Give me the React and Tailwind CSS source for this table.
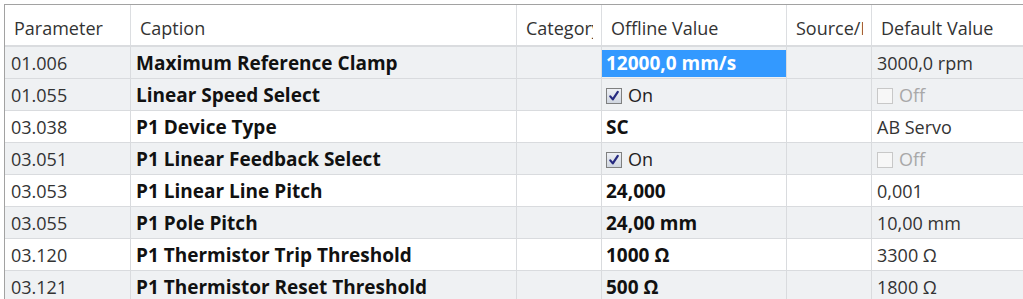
import React from "react";

const rows = [
  { id: "01.006", caption: "Maximum Reference Clamp", value: "12000,0 mm/s", def: "3000,0 rpm", selected: true },
  { id: "01.055", caption: "Linear Speed Select", check: true, defCheck: true },
  { id: "03.038", caption: "P1 Device Type", value: "SC", def: "AB Servo" },
  { id: "03.051", caption: "P1 Linear Feedback Select", check: true, defCheck: true },
  { id: "03.053", caption: "P1 Linear Line Pitch", value: "24,000", def: "0,001" },
  { id: "03.055", caption: "P1 Pole Pitch", value: "24,00 mm", def: "10,00 mm" },
  { id: "03.120", caption: "P1 Thermistor Trip Threshold", value: "1000 Ω", def: "3300 Ω" },
  { id: "03.121", caption: "P1 Thermistor Reset Threshold", value: "500 Ω", def: "1800 Ω" },
];

const cols = "grid grid-cols-[126px_386px_85px_185px_85px_1fr]";

const CheckOn = () => (
  <span className="flex items-center gap-[6px]">
    <span className="shrink-0 w-[16px] h-[16px] border border-[#7f8080] bg-gradient-to-b from-[#eef0f5] to-[#d0d6e0] flex items-center justify-center">
      <svg width="12" height="12" viewBox="0 0 12 12">
        <path d="M2.3 6.4 L4.8 9.4 L9.8 1.8" fill="none" stroke="#262a80" strokeWidth="2.2" strokeLinecap="round" strokeLinejoin="round" />
      </svg>
    </span>
    <span className="font-normal text-[18px] text-[#222]">On</span>
  </span>
);

const CheckOff = () => (
  <span className="flex items-center gap-[6px]">
    <span className="shrink-0 w-[16px] h-[16px] border border-[#c8c8c8] bg-[#f7f7f7]" />
    <span className="text-[#a8a8a8]">Off</span>
  </span>
);

const Head = ({ children, last }) => (
  <div className={`h-full flex items-center pt-[6px] pl-[9px] pr-[8px] ${last ? "" : "border-r border-[#dcdee1]"}`}>
    <div className="overflow-hidden whitespace-nowrap">{children}</div>
  </div>
);

export default function App() {
  return (
    <div className="w-[1023px] h-[299px] overflow-hidden bg-white pt-[4px] pl-[4px]" style={{ fontFamily: '"Open Sans", "Noto Sans", sans-serif' }}>
      <div className="border-t border-l border-[#a2a2a2] text-[18px] w-[1100px]">
        <div className={`${cols} h-[42px] border-b-2 border-[#dadcdf] text-[#333]`}>
          <Head>Parameter</Head>
          <Head>Caption</Head>
          <Head>Category</Head>
          <Head>Offline Value</Head>
          <Head>Source/Destination</Head>
          <Head last>Default Value</Head>
        </div>
        {rows.map((r, i) => (
          <div
            key={r.id}
            className={`${cols} h-[32px] border-b border-[#d9dbde] ${i % 2 === 0 && !r.selected ? "bg-white" : "bg-[#eff1f3]"}`}
          >
            <div className="flex items-center pt-[2px] pl-[6px] border-r border-[#d9dbde] text-[#333]">{r.id}</div>
            <div className="flex items-center pt-[2px] pl-[5px] border-r border-[#d9dbde] font-bold text-[19px] text-[#111]">{r.caption}</div>
            <div className="border-r border-[#d9dbde]" />
            <div className="flex items-center border-r border-[#d9dbde] font-bold text-[19px] text-[#111]">
              {r.selected ? (
                <div className="h-[27px] w-[184px] mt-[2px] bg-[#3399ff] text-white flex items-center pl-[4px]">{r.value}</div>
              ) : r.check ? (
                <div className="pt-[2px] pl-[4px]"><CheckOn /></div>
              ) : (
                <div className="pt-[2px] pl-[4px]">{r.value}</div>
              )}
            </div>
            <div className="border-r border-[#d9dbde]" />
            <div className="flex items-center pt-[2px] pl-[5px] text-[#333]">
              {r.defCheck ? <CheckOff /> : r.def}
            </div>
          </div>
        ))}
      </div>
    </div>
  );
}
